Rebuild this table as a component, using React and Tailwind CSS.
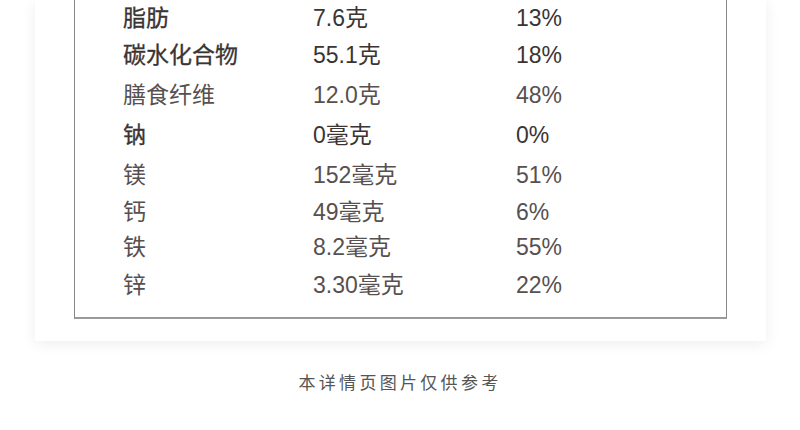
import React from "react";

const rows = [
  { name: "脂肪", amount: "7.6克", pct: "13%", bold: true, h: "h-[36px]" },
  { name: "碳水化合物", amount: "55.1克", pct: "18%", bold: true, h: "h-[39px]" },
  { name: "膳食纤维", amount: "12.0克", pct: "48%", bold: false, h: "h-[40px]" },
  { name: "钠", amount: "0毫克", pct: "0%", bold: true, h: "h-[41px]" },
  { name: "镁", amount: "152毫克", pct: "51%", bold: false, h: "h-[39px]" },
  { name: "钙", amount: "49毫克", pct: "6%", bold: false, h: "h-[34px]" },
  { name: "铁", amount: "8.2毫克", pct: "55%", bold: false, h: "h-[37px]" },
  { name: "锌", amount: "3.30毫克", pct: "22%", bold: false, h: "h-[38px]" },
];

const App = () => {
  return (
    <div
      className="w-[800px] h-[430px] bg-white overflow-hidden"
      style={{ fontFamily: '"Liberation Sans", "Noto Sans CJK SC", sans-serif' }}
    >
      {/* card with the nutrition table */}
      <div className="mx-[35px] w-[731px] bg-white shadow-[0_3px_14px_rgba(0,0,0,0.07)] px-[39px] pb-[22px]">
        <div className="border-x-[1.5px] border-b-2 border-x-[#8a8686] border-b-[#9c9999] pb-[13px] pl-[48px]">
          {rows.map((row) => (
            <div
              key={row.name}
              className={`grid grid-cols-[190px_203px_1fr] items-center text-[23px] leading-none ${row.h} ${
                row.bold ? "text-[#3b3433]" : "text-[#575050]"
              }`}
            >
              <span className={row.bold ? "[-webkit-text-stroke:0.3px_#3b3433]" : ""}>
                {row.name}
              </span>
              <span>{row.amount}</span>
              <span>{row.pct}</span>
            </div>
          ))}
        </div>
      </div>

      <p className="mt-[30px] text-center text-[17px] tracking-[3.3px] text-[#555]">
        本详情页图片仅供参考
      </p>
    </div>
  );
};

export default App;
